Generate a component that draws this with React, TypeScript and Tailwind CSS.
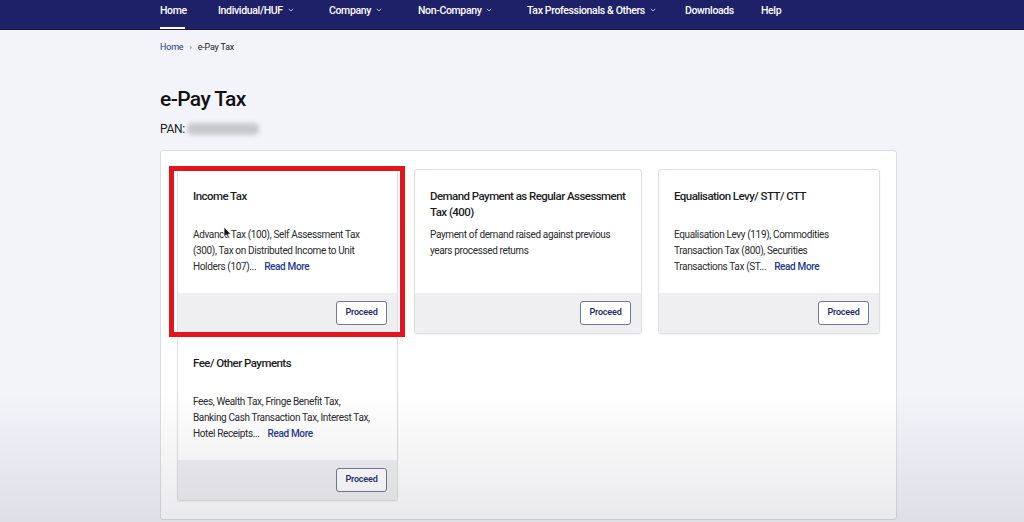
import React from "react";

const navItems = [
  { label: "Home", w: "w-[58px]", chev: false, active: true },
  { label: "Individual/HUF", w: "w-[111px]", chev: true },
  { label: "Company", w: "w-[89px]", chev: true },
  { label: "Non-Company", w: "w-[109px]", chev: true },
  { label: "Tax Professionals & Others", w: "w-[158px]", chev: true },
  { label: "Downloads", w: "w-[76px]", chev: false },
  { label: "Help", w: "w-[40px]", chev: false },
];

function Chev() {
  return (
    <svg width="6" height="4" viewBox="0 0 6 4" className="ml-[5px] mt-[-3px]" fill="none">
      <path d="M0.8 0.8 L3 3 L5.2 0.8" stroke="#c9cbe6" strokeWidth="0.9" />
    </svg>
  );
}

type CardProps = {
  title: string[];
  desc: string[];
  more?: boolean;
};

function Card({ title, desc, more }: CardProps) {
  return (
    <div className="flex flex-col bg-white border border-[#dedee4] rounded-[3px] shadow-[0_1px_2px_rgba(0,0,0,0.06)] overflow-hidden">
      <div className="h-[123px] pt-[18px] px-[15px]">
        <div className="h-[32px] text-[11.5px] leading-[16px] font-medium tracking-[-0.55px] text-[#1d1d1f]">
          {title.map((t) => (
            <div key={t} className="whitespace-nowrap">{t}</div>
          ))}
        </div>
        <div className="mt-[7px] text-[10px] leading-[16px] tracking-[-0.36px] text-[#2a2a2e]">
          {desc.map((d, i) => (
            <div key={d} className="whitespace-nowrap flex">
              <span>{d}</span>
              {more && i === desc.length - 1 && (
                <span className="ml-[8px] font-medium text-[#1f3a8f]">Read More</span>
              )}
            </div>
          ))}
        </div>
      </div>
      <div className="h-[40px] bg-[#efeff2] flex items-center justify-end pr-[10px]">
        <div className="w-[51px] h-[24px] flex items-center justify-center bg-white border border-[#6c7895] rounded-[3px] text-[9px] font-semibold tracking-[-0.2px] text-[#1f2f6e]">
          Proceed
        </div>
      </div>
    </div>
  );
}

export default function App() {
  return (
    <div className="relative w-[1024px] h-[522px] overflow-hidden bg-[#f3f3fa] font-['Roboto',sans-serif]">
      {/* Nav */}
      <div className="h-[30px] bg-[#1e2167] border-b border-[#14174f] flex pl-[160px]">
        {navItems.map((n) => (
          <div key={n.label} className={`${n.w} h-full relative`}>
            <span className="block pt-[5px] text-[10.5px] leading-[12px] font-medium tracking-[-0.35px] text-white whitespace-nowrap">
              <span className="inline-flex items-center">
                {n.label}
                {n.chev && <Chev />}
              </span>
            </span>
            {n.active && <div className="absolute left-0 bottom-0 w-[25px] h-[2px] bg-white" />}
          </div>
        ))}
      </div>

      {/* Breadcrumb */}
      <div className="pl-[160px] pt-[12px] flex items-center text-[9px] leading-[11px] tracking-[-0.2px]">
        <span className="text-[#2a3a7c]">Home</span>
        <span className="mx-[6px] text-[#555] text-[8px]">›</span>
        <span className="text-[#1d1d1f]">e-Pay Tax</span>
      </div>

      {/* Title */}
      <div className="pl-[160px] pt-[33px]">
        <div className="text-[21px] leading-[26px] font-medium tracking-[-0.6px] text-[#111]">e-Pay Tax</div>
        <div className="mt-[10px] flex items-center text-[12px] leading-[14px] tracking-[-0.3px] text-[#222]">
          <span>PAN:</span>
          <div className="ml-[2px] w-[72px] h-[12px] rounded-[5px] bg-[#c8c8cd] blur-[2px]" />
        </div>
      </div>

      {/* Container */}
      <div className="ml-[160px] mt-[14px] w-[737px] h-[370px] bg-white border border-[#dcdce2] rounded-[3px] pt-[18px] pl-[16px]">
        <div className="grid grid-cols-[221px_228px_222px] gap-x-4 gap-y-[2px]">
          <Card
            title={["Income Tax"]}
            desc={[
              "Advance Tax (100), Self Assessment Tax",
              "(300), Tax on Distributed Income to Unit",
              "Holders (107)...",
            ]}
            more
          />
          <Card
            title={["Demand Payment as Regular Assessment", "Tax (400)"]}
            desc={["Payment of demand raised against previous", "years processed returns"]}
          />
          <Card
            title={["Equalisation Levy/ STT/ CTT"]}
            desc={[
              "Equalisation Levy (119), Commodities",
              "Transaction Tax (800), Securities",
              "Transactions Tax (ST...",
            ]}
            more
          />
          <Card
            title={["Fee/ Other Payments"]}
            desc={[
              "Fees, Wealth Tax, Fringe Benefit Tax,",
              "Banking Cash Transaction Tax, Interest Tax,",
              "Hotel Receipts...",
            ]}
            more
          />
        </div>
      </div>

      {/* Red highlight annotation */}
      <div className="absolute left-[169px] top-[166px] w-[236px] h-[171px] border-[5px] border-[#e2141c] pointer-events-none" />

      {/* Mouse cursor */}
      <svg className="absolute left-[223px] top-[226px]" width="9" height="13" viewBox="0 0 9 13">
        <path d="M1 1 L1 11 L3.4 8.8 L5 12.2 L6.6 11.5 L5 8.2 L8 8.2 Z" fill="#111" stroke="#fff" strokeWidth="0.8" />
      </svg>

      {/* Bottom vignette */}
      <div className="absolute left-0 bottom-0 w-full h-[130px] bg-gradient-to-b from-transparent to-[rgba(60,60,80,0.11)] pointer-events-none" />
    </div>
  );
}
